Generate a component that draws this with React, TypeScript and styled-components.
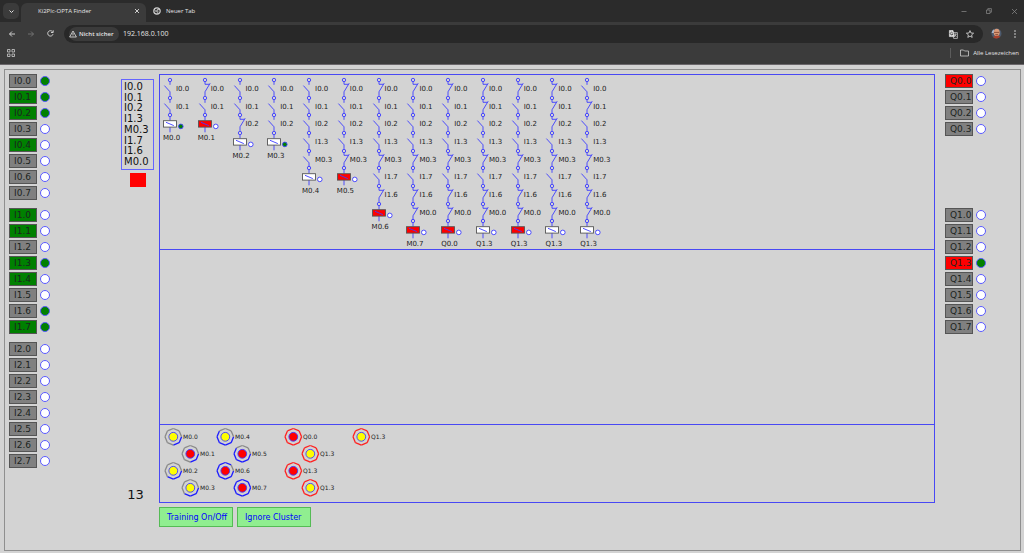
import React from "react";
import styled, { createGlobalStyle } from "styled-components";

const GlobalStyle = createGlobalStyle`
  *, *::before, *::after { box-sizing: border-box; }
  html, body { margin: 0; padding: 0; background: #d3d3d3; }
  body { font-family: Verdana, "DejaVu Sans", sans-serif; color: #222; }
  button { font: inherit; color: inherit; padding: 0; margin: 0; border: 0; background: none; }
  svg { display: block; overflow: visible; flex: none; }
`;

/* ---------- browser bar ---------- */

const Browser = styled.header`
  background: #3b3b3b;
  border-bottom: 1px solid #6b676b;
  font-family: "Open Sans", "Segoe UI", sans-serif;
  font-size: 6px;
  line-height: 10px;
  color: #e4e4e4;
`;

const TabStrip = styled.div`
  display: flex;
  align-items: flex-end;
  height: 22px;
  padding-left: 3px;
  background: #2b2b2b;
`;

const TabMenu = styled.button`
  display: grid;
  place-items: center;
  width: 16px;
  height: 16px;
  margin: 0 2px 3px 0;
  border-radius: 5px;
  background: #3b3b3b;
`;

const Tab = styled.div<{ $active?: boolean }>`
  display: flex;
  align-items: center;
  gap: 5px;
  width: ${(p) => (p.$active ? 125 : 120)}px;
  height: 19px;
  padding: ${(p) => (p.$active ? "0 7px 3px 17px" : "0 7px 3px 7px")};
  border-radius: 6px 6px 0 0;
  background: ${(p) => (p.$active ? "#3b3b3b" : "transparent")};
`;

const TabTitle = styled.span`
  flex: 1;
  white-space: nowrap;
`;

const WindowButtons = styled.div`
  display: flex;
  gap: 17px;
  margin-left: auto;
  padding: 0 6px 7px 0;
  color: #8c8c8c;
`;

const IconButton = styled.button`
  display: grid;
  place-items: center;
  width: 8px;
  height: 8px;
`;

const Toolbar = styled.div`
  display: flex;
  align-items: center;
  height: 23px;
  padding: 0 5px 0 8px;
`;

const NavButtons = styled.div`
  display: flex;
  gap: 11px;
  padding-right: 10px;
`;

const Address = styled.div`
  display: flex;
  flex: 1;
  align-items: center;
  gap: 9px;
  height: 18px;
  padding: 0 9px 0 5px;
  border-radius: 9px;
  background: #282828;
`;

const Security = styled.button`
  display: flex;
  align-items: center;
  gap: 2px;
  width: 50px;
  height: 14px;
  border-radius: 7px;
  background: #3b3b3b;
  font-weight: 600;
  white-space: nowrap;
`;

const Url = styled.input`
  flex: 1;
  min-width: 0;
  margin-left: -5px;
  padding: 0;
  border: 0;
  outline: 0;
  background: none;
  color: #e4e4e4;
  font: inherit;
  font-size: 7px;
`;

const Profile = styled.div`
  display: flex;
  align-items: center;
  gap: 9px;
  padding-left: 8px;
`;

const Bookmarks = styled.div`
  display: flex;
  align-items: center;
  justify-content: space-between;
  height: 19px;
  padding: 0 5px 3px 7px;
`;

const AllBookmarks = styled.button`
  display: flex;
  align-items: center;
  gap: 4px;
  padding-left: 9px;
  border-left: 1px solid #5c5c5c;
  white-space: nowrap;
`;

/* ---------- page ---------- */

const Frame = styled.main`
  display: flex;
  align-items: flex-start;
  margin: 4px 3px 3px 4px;
  padding: 4px 34px 23px 4px;
  border: 1px solid #8f8f8f;
`;

const IoColumn = styled.section`
  display: flex;
  flex: none;
  flex-direction: column;
  gap: 6px;
`;

const IoGroup = styled.div`
  display: flex;
  flex-direction: column;
  gap: 2px;
  min-height: 128px;
  padding-bottom: 2px;
`;

const IoRow = styled.div`
  display: flex;
  align-items: center;
  gap: 3px;
  height: 14px;
`;

const fills = { off: "#808080", green: "#008000", red: "#ff0000" };
type Fill = keyof typeof fills;

const IoButton = styled.button<{ $fill: Fill }>`
  width: 28px;
  height: 14px;
  padding-left: 4px;
  border: 1px solid #555;
  background: ${(p) => fills[p.$fill]};
  color: #1c2420;
  font-size: 9px;
  line-height: 12px;
  text-align: left;
`;

const Lamp = styled.span<{ $on: boolean }>`
  width: 10px;
  height: 10px;
  border: 1px solid #5a5aff;
  border-radius: 50%;
  background: ${(p) => (p.$on ? "#008000" : "#ffffff")};
`;

const Side = styled.section`
  display: flex;
  flex: none;
  flex-direction: column;
  align-items: center;
  width: 33px;
  margin: 5px 5px 0 71px;
`;

const Sequence = styled.ol`
  display: flex;
  flex-direction: column;
  justify-content: space-between;
  width: 33px;
  height: 91px;
  margin: 0 0 3px;
  padding: 2px 0 2px 2px;
  border: 1px solid #6464ff;
  list-style: none;
  font-size: 10px;
  line-height: 10px;
  color: #111;
`;

const RedSquare = styled.div`
  width: 16px;
  height: 14px;
  background: #ff0000;
`;

const Counter = styled.output`
  margin-top: 300px;
  padding-right: 4px;
  font-size: 13px;
  line-height: 16px;
  color: #111;
`;

const Center = styled.section`
  flex: 1;
  min-width: 0;
  margin-right: 10px;
`;

const Panels = styled.div`
  border: 1px solid #4848f4;
`;

const LadderPanel = styled.div`
  height: 175px;
  padding: 5px 0 0 1px;
  border-bottom: 1px solid #4848f4;
`;

const EmptyPanel = styled.div`
  height: 175px;
  border-bottom: 1px solid #4848f4;
`;

const Ladder = styled.div`
  display: grid;
  grid-template-columns: repeat(13, minmax(0, 1fr));
  width: 452px;
`;

const Rung = styled.div`
  display: grid;
  grid-template-rows: repeat(9, minmax(0, 1fr));
  height: 159px;
`;

const RungStep = styled.div`
  display: flex;
  font-size: 7px;
  line-height: 18px;
  white-space: nowrap;
`;

const Coil = styled.div`
  padding-left: 2px;
  font-size: 7px;
  line-height: 12px;
`;

const CoilSymbol = styled.svg`
  margin-left: -2px;
`;

const ClusterPanel = styled.div`
  display: flex;
  padding: 3px 0 6px 4px;
`;

const Cluster = styled.div<{ $wide?: boolean }>`
  width: ${(p) => (p.$wide ? 68 : 52)}px;
`;

const Neuron = styled.div<{ $shift: boolean }>`
  display: flex;
  align-items: center;
  gap: 1px;
  height: 17px;
  margin-left: ${(p) => (p.$shift ? 17 : 0)}px;
  font-size: 6px;
  white-space: nowrap;
`;

const Actions = styled.div`
  display: flex;
  gap: 4px;
  margin-top: 4px;
`;

const ActionButton = styled.button`
  width: 74px;
  height: 20px;
  padding-left: 7px;
  border: 1px solid #55bb55;
  background: #90ee90;
  color: #0000ff;
  font-size: 8px;
  text-align: left;
  white-space: nowrap;
`;

/* ---------- data ---------- */

type Io = [string, Fill, boolean];

const inputs: Io[][] = [
  [["I0.0", "off", true], ["I0.1", "green", true], ["I0.2", "green", true], ["I0.3", "off", false],
   ["I0.4", "green", false], ["I0.5", "off", false], ["I0.6", "off", false], ["I0.7", "off", false]],
  [["I1.0", "green", false], ["I1.1", "green", false], ["I1.2", "off", false], ["I1.3", "green", true],
   ["I1.4", "green", false], ["I1.5", "off", false], ["I1.6", "off", true], ["I1.7", "green", true]],
  [0, 1, 2, 3, 4, 5, 6, 7].map((n): Io => [`I2.${n}`, "off", false]),
];

const outputs: Io[][] = [
  [["Q0.0", "red", false], ["Q0.1", "off", false], ["Q0.2", "off", false], ["Q0.3", "off", false]],
  [0, 1, 2, 3, 4, 5, 6, 7].map((n): Io => [`Q1.${n}`, n === 3 ? "red" : "off", n === 3]),
];

const sequence = ["I0.0", "I0.1", "I0.2", "I1.3", "M0.3", "I1.7", "I1.6", "M0.0"];

/* contacts: o = normally open, c = normally closed */
const rungs: { contacts: string; name: string; red?: boolean; lamp?: boolean }[] = [
  { contacts: "oo", name: "M0.0", lamp: true },
  { contacts: "co", name: "M0.1", red: true },
  { contacts: "ooc", name: "M0.2" },
  { contacts: "ooo", name: "M0.3", lamp: true },
  { contacts: "ooooo", name: "M0.4" },
  { contacts: "coooc", name: "M0.5", red: true },
  { contacts: "cooococ", name: "M0.6", red: true },
  { contacts: "cooococc", name: "M0.7", red: true },
  { contacts: "cooococc", name: "Q0.0", red: true },
  { contacts: "ccoococc", name: "Q1.3" },
  { contacts: "cooococc", name: "Q1.3", red: true },
  { contacts: "cccococc", name: "Q1.3" },
  { contacts: "ocoococc", name: "Q1.3" },
];

/* blue: number of blue ring segments, -1 = red ring */
const clusters: { name: string; blue: number; red: boolean }[][] = [
  [{ name: "M0.0", blue: 2, red: false }, { name: "M0.1", blue: 2, red: true },
   { name: "M0.2", blue: 3, red: false }, { name: "M0.3", blue: 3, red: false }],
  [{ name: "M0.4", blue: 5, red: false }, { name: "M0.5", blue: 5, red: true },
   { name: "M0.6", blue: 7, red: true }, { name: "M0.7", blue: 8, red: true }],
  [{ name: "Q0.0", blue: -1, red: true }, { name: "Q1.3", blue: -1, red: false },
   { name: "Q1.3", blue: -1, red: true }, { name: "Q1.3", blue: -1, red: false }],
  [{ name: "Q1.3", blue: -1, red: false }],
];

/* ---------- parts ---------- */

const BLUE = "#3c3cff";

function Contact({ closed }: { closed: boolean }) {
  return (
    <svg width="15" height="17" viewBox="0 0 15 17" fill="none" stroke={BLUE} strokeWidth="0.9">
      <circle cx="9" cy="0" r="1.7" />
      {closed ? (
        <path d="M9 1.7V4.3H13.4M14.2 3.2L9 11.8V15.9" />
      ) : (
        <path d="M9 1.7V4.8M3.4 5.6L9 11.8V15.9" />
      )}
    </svg>
  );
}

function CoilDrawing({ red, lamp }: { red: boolean; lamp: boolean }) {
  return (
    <CoilSymbol width="24" height="17" viewBox="0 0 24 17" fill="none" stroke={BLUE} strokeWidth="0.9">
      <circle cx="9" cy="0" r="1.7" />
      <path d="M9 1.7V5.5M9 12V17.3" />
      <rect x="2.5" y="5.7" width="13" height="6.4" fill={red ? "#ff0000" : "#fff"} stroke="#555" />
      <path d="M5 7.3L12.8 10.6" />
      <circle cx="19.8" cy="11.4" r="2.3" fill={lamp ? "#008000" : "#fff"} />
    </CoilSymbol>
  );
}

function Ring({ blue, red }: { blue: number; red: boolean }) {
  const at = (deg: number) => {
    const a = (deg * Math.PI) / 180;
    return `${(9.3 + 8.3 * Math.cos(a)).toFixed(2)} ${(8.8 + 8.3 * Math.sin(a)).toFixed(2)}`;
  };
  return (
    <svg width="18" height="18" viewBox="0 0 18 18" fill="none" strokeWidth="1.3">
      {[0, 1, 2, 3, 4, 5, 6, 7].map((k) => (
        <path
          key={k}
          d={`M${at(k * 45)}L${at(k * 45 + 45)}`}
          stroke={blue < 0 ? "#ff2020" : k < blue ? "#1c1cff" : "#8a8a8a"}
        />
      ))}
      <circle cx="9.3" cy="8.8" r="4.4" strokeWidth="0.9" fill={red ? "#ff0000" : "#ffff00"} stroke={BLUE} />
    </svg>
  );
}

function IoGroups({ groups }: { groups: Io[][] }) {
  return (
    <>
      {groups.map((group, i) => (
        <IoGroup key={i}>
          {group.map(([name, fill, on]) => (
            <IoRow key={name}>
              <IoButton $fill={fill}>{name}</IoButton>
              <Lamp $on={on} />
            </IoRow>
          ))}
        </IoGroup>
      ))}
    </>
  );
}

function BrowserBar() {
  return (
    <Browser>
      <TabStrip>
        <TabMenu aria-label="Tabs">
          <svg width="5" height="5" viewBox="0 0 5 5" fill="none" stroke="#ddd"><path d="M0.5 1.5l2 2 2-2" /></svg>
        </TabMenu>
        <Tab $active>
          <TabTitle>Ki2Plc-OPTA Finder</TabTitle>
          <svg width="4" height="4" viewBox="0 0 4 4" stroke="#ddd" strokeWidth="0.9"><path d="M0 0l4 4M4 0l-4 4" /></svg>
        </Tab>
        <Tab>
          <svg width="8" height="8" viewBox="0 0 8 8" fill="none" stroke="#d0d0d0">
            <circle cx="4" cy="4" r="3.2" strokeWidth="1.2" />
            <circle cx="4" cy="4" r="1.3" fill="#d0d0d0" stroke="#2b2b2b" strokeWidth="0.6" />
            <path d="M4 2.6H7M2.8 4.7L1.3 2.1M5.2 4.7L3.8 7.2" strokeWidth="0.8" />
          </svg>
          <TabTitle>Neuer Tab</TabTitle>
        </Tab>
        <WindowButtons>
          <IconButton aria-label="Minimieren">
            <svg width="6" height="6" viewBox="0 0 6 6" stroke="currentColor" strokeWidth="0.7"><path d="M0.5 3.5h5" /></svg>
          </IconButton>
          <IconButton aria-label="Verkleinern">
            <svg width="6" height="6" viewBox="0 0 6 6" fill="none" stroke="currentColor" strokeWidth="0.7"><path d="M0.5 2h3.5v3.5H0.5zM1.8 2V0.6h3.6v3.6H4" /></svg>
          </IconButton>
          <IconButton aria-label="Schließen">
            <svg width="5" height="5" viewBox="0 0 5 5" stroke="currentColor" strokeWidth="0.7"><path d="M0 0l5 5M5 0l-5 5" /></svg>
          </IconButton>
        </WindowButtons>
      </TabStrip>
      <Toolbar>
        <NavButtons>
          <IconButton aria-label="Zurück">
            <svg width="6" height="6" viewBox="0 0 6 6" fill="none" stroke="#ddd" strokeWidth="0.9"><path d="M6 3H0.6M3 0.5L0.5 3 3 5.5" /></svg>
          </IconButton>
          <IconButton aria-label="Vor">
            <svg width="6" height="6" viewBox="0 0 6 6" fill="none" stroke="#777" strokeWidth="0.9"><path d="M0 3h5.4M3 0.5L5.5 3 3 5.5" /></svg>
          </IconButton>
          <IconButton aria-label="Neu laden">
            <svg width="7" height="7" viewBox="0 0 7 7" fill="none" stroke="#ddd" strokeWidth="0.9"><path d="M6 4.2A2.7 2.7 0 1 1 5.6 1.8M6.2 0.3V2.5H4" /></svg>
          </IconButton>
        </NavButtons>
        <Address>
          <Security>
            <svg width="8" height="8" viewBox="0 0 8 8" fill="none" stroke="#e4e4e4" strokeWidth="0.8"><path d="M4 1L7.4 7H0.6zM4 3v2M4 5.5v0.7" /></svg>
            Nicht sicher
          </Security>
          <Url aria-label="Adresse" defaultValue="192.168.0.100" />
          <IconButton aria-label="Übersetzen">
            <svg width="9" height="9" viewBox="0 0 9 9" fill="none" stroke="#ddd" strokeWidth="0.7">
              <path d="M3.6 2.6H8.4V8.4H4.6z" />
              <path d="M0.4 0.5H4L5.4 6.6H0.4z" fill="#ddd" />
              <path d="M5.2 4.2H7.6M6.4 3.6V4.2M7 4.3L5.4 6.6M5.8 5l1.6 1.8" />
              <path d="M3.6 2.8A1.3 1.3 0 1 0 3.8 4H2.8" stroke="#282828" />
            </svg>
          </IconButton>
          <IconButton aria-label="Lesezeichen setzen">
            <svg width="8" height="8" viewBox="0 0 8 8" fill="none" stroke="#ddd" strokeWidth="0.8"><path d="M4 0.6L5 3l2.6 0.2-2 1.7L6.2 7.4 4 6.1 1.8 7.4l0.6-2.5-2-1.7L3 3z" /></svg>
          </IconButton>
        </Address>
        <Profile>
          <svg width="11" height="11" viewBox="0 0 11 11">
            <circle cx="5.5" cy="5.5" r="5" fill="#4c5a6e" />
            <path d="M0.6 5A5 5 0 0 1 3 1.2L3.4 5z" fill="#9fb6cf" />
            <ellipse cx="5.7" cy="4.6" rx="3" ry="3.8" fill="#d99a78" />
            <path d="M2.2 9.2C3.5 7.4 8 7.4 9.4 8.6A5 5 0 0 1 2.2 9.2z" fill="#a8402c" />
            <path d="M3 4.4h5.2M4.3 6.6h2.8" stroke="#7b3f2b" strokeWidth="0.8" />
          </svg>
          <IconButton aria-label="Menü">
            <svg width="2" height="8" viewBox="0 0 2 8" fill="#ddd"><circle cx="1" cy="1" r="0.8" /><circle cx="1" cy="4" r="0.8" /><circle cx="1" cy="7" r="0.8" /></svg>
          </IconButton>
        </Profile>
      </Toolbar>
      <Bookmarks>
        <IconButton aria-label="Apps">
          <svg width="8" height="8" viewBox="0 0 8 8" fill="none" stroke="#ccc" strokeWidth="0.8"><path d="M0.5 0.5h2.5v2.5H0.5zM5 0.5h2.5v2.5H5zM0.5 5h2.5v2.5H0.5zM5 5h2.5v2.5H5z" /></svg>
        </IconButton>
        <AllBookmarks>
          <svg width="9" height="8" viewBox="0 0 9 8" fill="none" stroke="#ccc" strokeWidth="0.8"><path d="M0.5 1h3l1 1h4v5h-8z" /></svg>
          Alle Lesezeichen
        </AllBookmarks>
      </Bookmarks>
    </Browser>
  );
}

export default function App() {
  return (
    <>
      <GlobalStyle />
      <BrowserBar />
      <Frame>
        <IoColumn>
          <IoGroups groups={inputs} />
        </IoColumn>
        <Side>
          <Sequence>
            {sequence.map((s) => (
              <li key={s}>{s}</li>
            ))}
          </Sequence>
          <RedSquare />
          <Counter>13</Counter>
        </Side>
        <Center>
          <Panels>
            <LadderPanel>
              <Ladder>
                {rungs.map((rung, i) => (
                  <Rung key={i}>
                    {[...rung.contacts].map((c, k) => (
                      <RungStep key={k}>
                        <Contact closed={c === "c"} />
                        {sequence[k]}
                      </RungStep>
                    ))}
                    <Coil>
                      <CoilDrawing red={!!rung.red} lamp={!!rung.lamp} />
                      {rung.name}
                    </Coil>
                  </Rung>
                ))}
              </Ladder>
            </LadderPanel>
            <EmptyPanel />
            <ClusterPanel>
              {clusters.map((cluster, i) => (
                <Cluster key={i} $wide={i > 0}>
                  {cluster.map((n, k) => (
                    <Neuron key={k} $shift={k % 2 === 1}>
                      <Ring blue={n.blue} red={n.red} />
                      {n.name}
                    </Neuron>
                  ))}
                </Cluster>
              ))}
            </ClusterPanel>
          </Panels>
          <Actions>
            <ActionButton>Training On/Off</ActionButton>
            <ActionButton>Ignore Cluster</ActionButton>
          </Actions>
        </Center>
        <IoColumn>
          <IoGroups groups={outputs} />
        </IoColumn>
      </Frame>
    </>
  );
}
